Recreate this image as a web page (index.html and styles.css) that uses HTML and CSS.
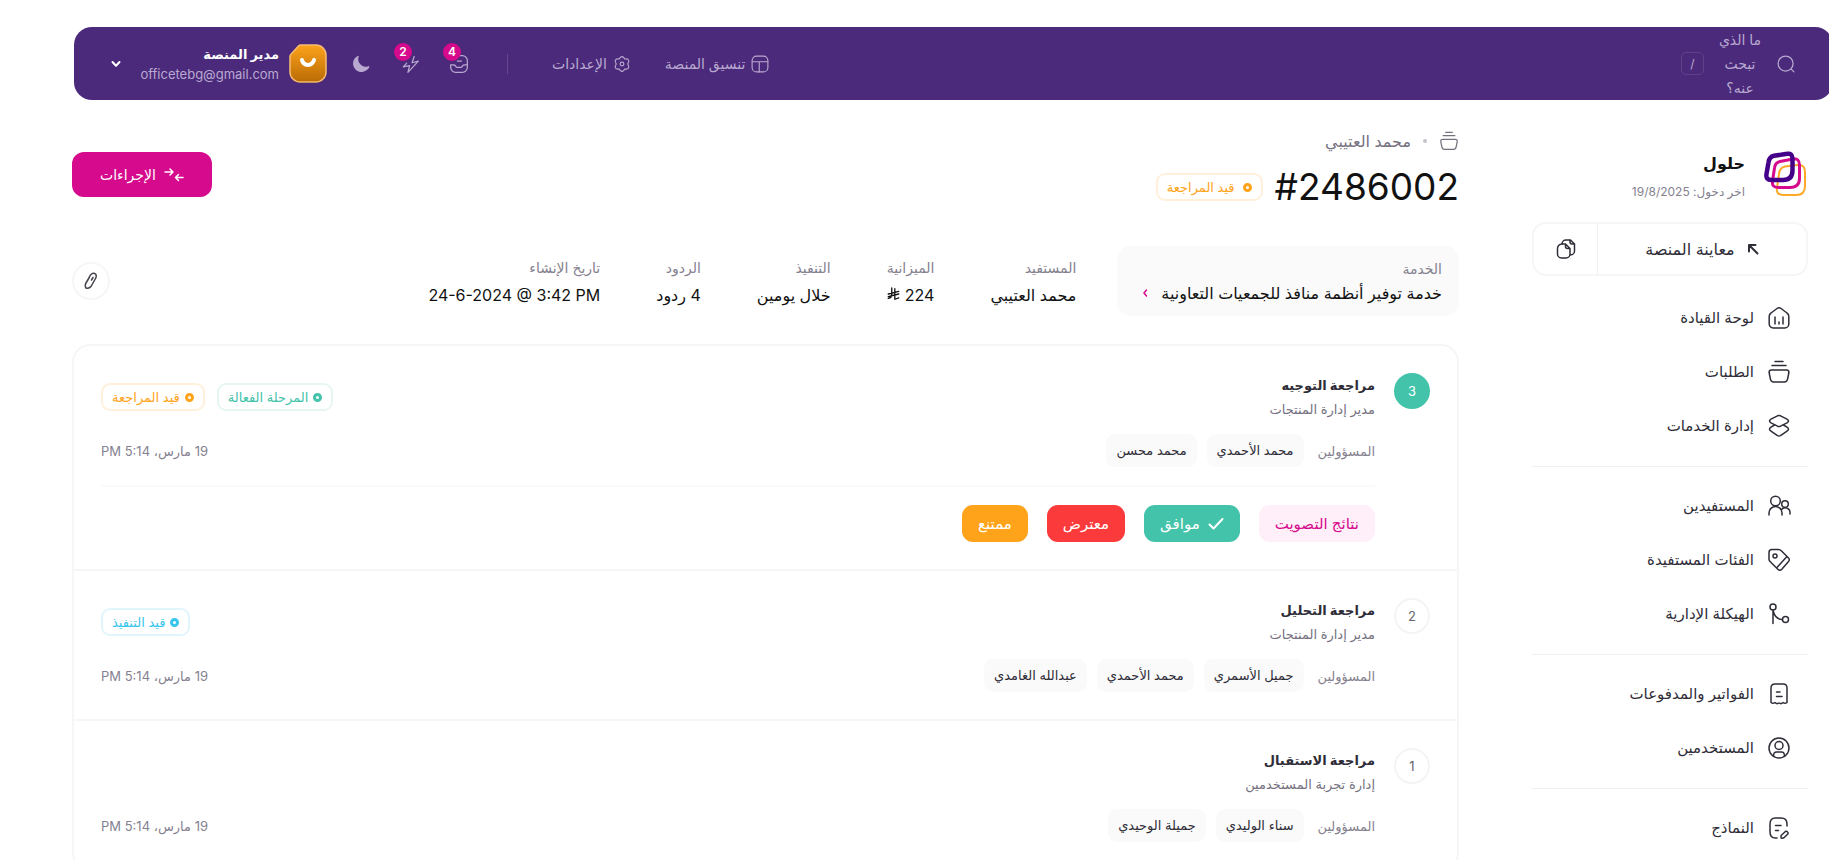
FILE: index.html
```html
<!DOCTYPE html>
<html lang="ar" dir="rtl">
<head>
    <meta charset="UTF-8">
    <meta name="viewport" content="width=device-width, initial-scale=1.0">
    <title>طلب #2486002 - حلول</title>
    <link rel="stylesheet" href="styles.css">
</head>
<body>
    <header class="topbar">
        <button type="button" class="search">
            <svg class="icon" width="20" height="20" viewBox="0 0 24 24"><circle cx="11.5" cy="11.5" r="9"/><path d="M18.500 18.500l3 3"/></svg>
            <span class="search-text">ما الذي تبحث عنه؟</span>
            <kbd class="search-key">/</kbd>
        </button>
        <nav class="top-nav">
            <a href="#" class="top-link">
                <svg class="icon" width="18" height="18" viewBox="0 0 24 24"><rect x="1.500" y="1.500" width="21" height="21" rx="6"/><path d="M1.500 9h21M11 9v13.500"/></svg>
                تنسيق المنصة
            </a>
            <a href="#" class="top-link">
                <svg class="icon" width="18" height="18" viewBox="0 0 24 24"><path d="M9.600 3.500Q12 .8 14.400 3.500L15.800 5.400 18.200 5.100Q21.800 5.800 20.800 9.500L19.600 12 20.800 14.500Q21.800 18.200 18.200 18.900L15.800 18.600 14.400 20.500Q12 23.200 9.600 20.500L8.200 18.600 5.800 18.900Q2.200 18.200 3.200 14.500L4.400 12 3.200 9.500Q2.200 5.800 5.800 5.100L8.200 5.400z"/><circle cx="12" cy="12" r="2.500"/></svg>
                الإعدادات
            </a>
        </nav>
        <span class="top-divider"></span>
        <div class="top-icons">
            <button type="button" class="icon-btn" aria-label="الرسائل">
                <svg class="icon" width="20" height="20" viewBox="0 0 24 24"><path d="M13 2h3a6 6 0 0 1 6 6v8a6 6 0 0 1-6 6H8a6 6 0 0 1-6-6v-3h3.500c1 0 1.700.4 2.200 1.200l.3.600c.4.700 1.100 1.200 2 1.200h4c.9 0 1.600-.5 2-1.200l.3-.6c.5-.8 1.200-1.200 2.200-1.200H22M10 8.500h5"/></svg>
                <span class="count">4</span>
            </button>
            <button type="button" class="icon-btn" aria-label="التنبيهات">
                <svg class="icon" width="20" height="20" viewBox="0 0 24 24"><path d="M17 3l-2.500 7.500L22 8.500 9.500 22l2-8L4 15.500 8 11"/></svg>
                <span class="count">2</span>
            </button>
            <button type="button" class="icon-btn" aria-label="الوضع الليلي">
                <svg class="icon-fill" width="20" height="20" viewBox="0 0 24 24"><path d="M8 2.300A10.200 10.200 0 1 0 22 15.500a.8.800 0 0 0-1.100-.9A9 9 0 0 1 9.200 3.300a.8.800 0 0 0-1.200-1z"/></svg>
            </button>
        </div>
        <button type="button" class="profile">
            <svg width="38" height="40" viewBox="0 0 38 40">
                <defs>
                    <linearGradient id="avatarFill" x1="0" y1="0" x2="0" y2="1">
                        <stop offset="0" stop-color="#fda31c"/>
                        <stop offset="1" stop-color="#b96b04"/>
                    </linearGradient>
                </defs>
                <path d="M11 3.500h16a10 10 0 0 1 10 10V29a10 10 0 0 1-10 10H11A10 10 0 0 1 1 29V14z" fill="#24104a"/>
                <path d="M12 1h15a10 10 0 0 1 10 10v17a10 10 0 0 1-10 10H11A10 10 0 0 1 1 28V12.500c0-1 .4-1.700 1-2.300L9.500 2c.7-.7 1.500-1 2.500-1z" fill="url(#avatarFill)" stroke="#f6bd72" stroke-width="1.500"/>
                <path d="M13 16c1.500 6.500 10 6.500 12 0" fill="none" stroke="#fff" stroke-width="4" stroke-linecap="round"/>
            </svg>
            <span class="profile-text">
                <span class="profile-name">مدير المنصة</span>
                <span class="profile-mail">officetebg@gmail.com</span>
            </span>
            <svg class="icon bold chevron" width="10" height="10" viewBox="0 0 10 10"><path d="M1.500 3 5 6.800 8.500 3"/></svg>
        </button>
    </header>

    <div class="layout">
        <aside class="sidebar">
            <div class="brand">
                <svg width="44" height="46" viewBox="0 0 44 46" fill="none">
                    <path d="M21 15.500 34 14q7-.5 7 7v14q0 9-9 9H19q-7 0-6-7l2-14q.8-6.500 6-7.500z" stroke="#ffa928" stroke-width="2"/>
                    <path d="M16 10.500 29 8q6.500-1 6.500 6v13q0 9.500-9.500 9.500H14q-6.500 0-5.500-6.500l2-13q.7-5.500 5.500-6.500z" stroke="#d60a8c" stroke-width="3"/>
                    <path d="M10 4.800 23 2.800q5.500-1 5.500 5v11.500q0 9.700-9.500 9.700H7.500q-6 0-5-6l2-11.700Q5.200 6 10 4.800z" stroke="#450089" stroke-width="4.500"/>
                </svg>
                <div class="brand-text">
                    <strong class="brand-name">حلول</strong>
                    <span class="brand-login">اخر دخول: 19/8/2025</span>
                </div>
            </div>
            <div class="preview">
                <a href="#" class="preview-link">
                    <svg class="icon bold" width="12" height="12" viewBox="0 0 12 12"><path d="M2 8.500V2h6.500M2 2l8.500 8.500"/></svg>
                    معاينة المنصة
                </a>
                <button type="button" class="preview-copy" aria-label="نسخ">
                    <svg class="icon" width="20" height="22" viewBox="0 0 20 22"><path d="M6 6a4 4 0 0 1 4-4h4.500L18.500 6v7a4 4 0 0 1-4 4M14 2v2a2 2 0 0 0 2 2h2.500"/><path d="M6 6h3.500l4.500 4.500V16a4 4 0 0 1-4 4H5.500a4 4 0 0 1-4-4v-5.500A4.500 4.500 0 0 1 6 6zM9.500 6v2.500a2 2 0 0 0 2 2H14"/></svg>
                </button>
            </div>
            <nav class="menu">
                <div class="menu-group">
                    <a href="#" class="menu-item">
                        <svg class="icon" width="24" height="24" viewBox="0 0 24 24"><path d="M10 2.500 4 7a4 4 0 0 0-1.800 3.400V18a4 4 0 0 0 4 4h11.600a4 4 0 0 0 4-4v-7.600A4 4 0 0 0 20 7l-6-4.500a3.300 3.300 0 0 0-4 0zM8 11v7M12 16v2M16 11v7"/></svg>
                        لوحة القيادة
                    </a>
                    <a href="#" class="menu-item">
                        <svg class="icon" width="24" height="24" viewBox="0 0 24 24"><path d="M8 1.500h8M5 5.500h14M4.500 10h15q2.800 0 2.300 3l-1.200 6q-.5 3-3.300 3H6.700q-2.800 0-3.300-3l-1.200-6Q1.700 10 4.500 10z"/></svg>
                        الطلبات
                    </a>
                    <a href="#" class="menu-item">
                        <svg class="icon" width="24" height="24" viewBox="0 0 24 24"><path d="M10.500 1.800 4 5.200q-3 1.800 0 3.600l6.500 3.400q1.500.7 3 0L20 8.800q3-1.800 0-3.600l-6.500-3.400q-1.500-.7-3 0z"/><path d="m7.500 11-3.500 2.200q-3 2 0 3.900l6.500 4.500q1.500.8 3 0l6.500-4.500q3-1.900 0-3.900L16.500 11"/></svg>
                        إدارة الخدمات
                    </a>
                </div>
                <div class="menu-group">
                    <a href="#" class="menu-item">
                        <svg class="icon" width="24" height="24" viewBox="0 0 24 24"><circle cx="8.500" cy="7" r="4.800"/><path d="M2 21v-2a6.500 6.500 0 0 1 13 0v2"/><circle cx="18" cy="10" r="3.300"/><path d="M14.500 15.500a4.800 4.800 0 0 1 8.500 3.500v1"/></svg>
                        المستفيدين
                    </a>
                    <a href="#" class="menu-item">
                        <svg class="icon" width="24" height="24" viewBox="0 0 24 24"><path d="M5 1.500h6.500q1.500 0 2.800 1.300l7 7q2 2 0 4l-6.500 7.400q-2 2-4 0l-7-7Q2 13 2 11.500v-7q0-3 3-3zM19.500 9 10 19.500"/><circle cx="8" cy="8" r="2"/></svg>
                        الفئات المستفيدة
                    </a>
                    <a href="#" class="menu-item">
                        <svg class="icon" width="24" height="24" viewBox="0 0 24 24"><circle cx="6" cy="5" r="3"/><circle cx="18.500" cy="17.500" r="3"/><path d="M6 8v13.500M6.200 9c1.300 5 4 8.300 9 8.600"/></svg>
                        الهيكلة الإدارية
                    </a>
                </div>
                <div class="menu-group">
                    <a href="#" class="menu-item">
                        <svg class="icon" width="24" height="24" viewBox="0 0 24 24"><path d="M4 20.500V6q0-4 4-4h8q4 0 4 4v14.500q-2 1.500-4 0-2 2-4 0.500-2 1.500-4-.5-2 1.500-4 0zM9.500 10H13M9.500 14.500H15"/></svg>
                        الفواتير والمدفوعات
                    </a>
                    <a href="#" class="menu-item">
                        <svg class="icon" width="24" height="24" viewBox="0 0 24 24"><circle cx="12" cy="12" r="10"/><circle cx="12" cy="9.500" r="4"/><path d="M6.500 20q0-4 3-4h5q3 0 3 4"/></svg>
                        المستخدمين
                    </a>
                </div>
                <div class="menu-group">
                    <a href="#" class="menu-item">
                        <svg class="icon" width="24" height="24" viewBox="0 0 24 24"><path d="M20 10V8q0-6-6-6H8.500Q3 2 3 8v8q0 6 5.500 6h1.500M8.500 9.500H14M8.500 14.500h3M20 15.500q1.500 1 1 2.200l-4 4q-1.500.8-2.800.3-.6-1.300.2-2.800l4-3.700q.8-.5 1.600 0z"/></svg>
                        النماذج
                    </a>
                </div>
            </nav>
        </aside>

        <main class="content">
            <div class="page-head">
                <div>
                    <div class="breadcrumb">
                        <svg class="icon" width="20" height="20" viewBox="0 0 24 24"><path d="M8 1.500h8M5 5.500h14M4.500 10h15q2.800 0 2.300 3l-1.200 6q-.5 3-3.300 3H6.700q-2.800 0-3.300-3l-1.200-6Q1.700 10 4.500 10z"/></svg>
                        <span class="breadcrumb-dot"></span>
                        <a href="#" class="breadcrumb-link">محمد العتيبي</a>
                    </div>
                    <div class="title-row">
                        <h1 class="title" dir="ltr">#2486002</h1>
                        <span class="badge badge-orange">قيد المراجعة</span>
                    </div>
                </div>
                <button type="button" class="actions-btn">
                    <svg class="icon" width="20" height="16" viewBox="0 0 20 16"><path d="M1 5h8M6 2l3 3-3 3M19 10.500h-7.500M14.500 7.500l-3 3 3 3"/></svg>
                    الإجراءات
                </button>
            </div>

            <div class="info-row">
                <a href="#" class="service">
                    <span class="info-label">الخدمة</span>
                    <span class="service-name">
                        خدمة توفير أنظمة منافذ للجمعيات التعاونية
                        <svg class="icon pink" width="8" height="10" viewBox="0 0 8 10"><path d="M5.500 2 3 5l2.500 3"/></svg>
                    </span>
                </a>
                <dl class="info-list">
                    <div><dt class="info-label">المستفيد</dt><dd class="info-value">محمد العتيبي</dd></div>
                    <div>
                        <dt class="info-label">الميزانية</dt>
                        <dd class="info-value">
                            224
                            <svg class="icon" width="13" height="14" viewBox="0 0 14 16"><path d="M5 1v9q0 2-4 3M8.500 2v12M1 8l12-3M1 11l12-3M8.500 14l4.500-1.500"/></svg>
                        </dd>
                    </div>
                    <div><dt class="info-label">التنفيذ</dt><dd class="info-value">خلال يومين</dd></div>
                    <div><dt class="info-label">الردود</dt><dd class="info-value">4 ردود</dd></div>
                    <div><dt class="info-label">تاريخ الإنشاء</dt><dd class="info-value" dir="ltr">24-6-2024 @ 3:42 PM</dd></div>
                </dl>
                <button type="button" class="attach" aria-label="المرفقات">
                    <svg class="icon" width="18" height="18" viewBox="0 0 18 18"><path d="M9 2.500q2.500-2 4.500-.5 1.500 2 0 4.500L9 14.500q-2 2.500-5 1.500-1.500-2.500 0-5L7.500 5Q8.300 3.200 9 2.500zM11 5.500 9.500 8"/></svg>
                </button>
            </div>

            <ol class="steps">
                <li class="step">
                    <span class="step-no active">3</span>
                    <div class="step-body">
                        <div class="step-row">
                            <div>
                                <h2 class="step-title">مراجعة التوجيه</h2>
                                <p class="step-sub">مدير إدارة المنتجات</p>
                            </div>
                            <div class="badges">
                                <span class="badge badge-green">المرحلة الفعالة</span>
                                <span class="badge badge-orange">قيد المراجعة</span>
                            </div>
                        </div>
                        <div class="step-row people-row">
                            <div class="people">
                                <span class="people-label">المسؤولين</span>
                                <span class="chip">محمد الأحمدي</span>
                                <span class="chip">محمد محسن</span>
                            </div>
                            <time class="step-date">19 مارس، 5:14 PM</time>
                        </div>
                        <div class="votes">
                            <button type="button" class="vote vote-result">نتائج التصويت</button>
                            <button type="button" class="vote vote-yes">
                                <svg class="icon bold" width="16" height="12" viewBox="0 0 16 12"><path d="m1.500 6.500 4 4L14.500 1"/></svg>
                                موافق
                            </button>
                            <button type="button" class="vote vote-no">معترض</button>
                            <button type="button" class="vote vote-abstain">ممتنع</button>
                        </div>
                    </div>
                </li>
                <li class="step">
                    <span class="step-no">2</span>
                    <div class="step-body">
                        <div class="step-row">
                            <div>
                                <h2 class="step-title">مراجعة التحليل</h2>
                                <p class="step-sub">مدير إدارة المنتجات</p>
                            </div>
                            <div class="badges">
                                <span class="badge badge-blue">قيد التنفيذ</span>
                            </div>
                        </div>
                        <div class="step-row people-row">
                            <div class="people">
                                <span class="people-label">المسؤولين</span>
                                <span class="chip">جميل الأسمري</span>
                                <span class="chip">محمد الأحمدي</span>
                                <span class="chip">عبدالله الغامدي</span>
                            </div>
                            <time class="step-date">19 مارس، 5:14 PM</time>
                        </div>
                    </div>
                </li>
                <li class="step">
                    <span class="step-no">1</span>
                    <div class="step-body">
                        <div class="step-row">
                            <div>
                                <h2 class="step-title">مراجعة الاستقبال</h2>
                                <p class="step-sub">إدارة تجربة المستخدمين</p>
                            </div>
                        </div>
                        <div class="step-row people-row">
                            <div class="people">
                                <span class="people-label">المسؤولين</span>
                                <span class="chip">سناء الوليدي</span>
                                <span class="chip">جميلة الوحيدي</span>
                            </div>
                            <time class="step-date">19 مارس، 5:14 PM</time>
                        </div>
                    </div>
                </li>
            </ol>
        </main>
    </div>
</body>
</html>
```
FILE: styles.css
```css
*,
*::before {
    box-sizing: border-box;
    margin: 0;
    padding: 0;
}
body {
    height: 100vh;
    overflow: hidden;
    background: #fff;
    color: #111;
    font-family: Inter, "DejaVu Sans", sans-serif;
    font-size: 14px;
    line-height: 24px;
}
a {
    color: inherit;
    text-decoration: none;
}
button {
    font: inherit;
    color: inherit;
    background: none;
    border: none;
    cursor: pointer;
}
ol {
    list-style: none;
}
.icon {
    flex: none;
    fill: none;
    stroke: currentColor;
    stroke-width: 1.5;
    stroke-linecap: round;
    stroke-linejoin: round;
}
.icon.bold {
    stroke-width: 2;
}
.icon.pink {
    color: #d60a8c;
}
.icon-fill {
    fill: currentColor;
}

/* top bar */
.topbar {
    display: flex;
    align-items: center;
    height: 73px;
    margin: 27px -4px 0 74px;
    padding: 0 37px;
    background: #4b2a7b;
    border-radius: 18px;
    color: #b9a9d0;
}
.search {
    display: flex;
    align-items: center;
    gap: 10px;
}
.search-text {
    width: 52px;
    text-align: center;
}
.search-key {
    width: 23px;
    height: 23px;
    border: 1px solid #5f4189;
    border-radius: 5px;
    font: inherit;
    font-size: 12px;
    line-height: 21px;
}
.top-nav {
    display: flex;
    gap: 34px;
    margin-right: auto;
}
.top-link {
    display: flex;
    align-items: center;
    gap: 6px;
}
.top-divider {
    width: 1px;
    height: 20px;
    margin: 0 44px 0 38px;
    background: #65488f;
}
.top-icons {
    display: flex;
    gap: 29px;
}
.icon-btn {
    position: relative;
    display: flex;
}
.count {
    position: absolute;
    top: -11px;
    right: 8px;
    width: 18px;
    height: 18px;
    border-radius: 50%;
    background: #d60a8c;
    color: #fff;
    font-size: 12px;
    font-weight: 600;
    line-height: 18px;
    text-align: center;
}
.profile {
    display: flex;
    align-items: center;
    gap: 10px;
    margin-right: 24px;
}
.profile-text {
    display: flex;
    flex-direction: column;
    width: 138px;
    line-height: 20px;
    text-align: right;
}
.profile-name {
    color: #fff;
    font-size: 13px;
    font-weight: 700;
}
.profile-mail {
    font-size: 13px;
}
.chevron {
    margin-right: 10px;
    color: #fff;
}

/* sidebar */
.layout {
    display: flex;
    gap: 73px;
    padding: 29px 21px 0 72px;
}
.sidebar {
    flex: 0 0 276px;
    padding-top: 22px;
    color: #2f2d38;
}
.brand {
    display: flex;
    gap: 19px;
    height: 71px;
}
.brand-text {
    display: flex;
    flex-direction: column;
    gap: 5px;
}
.brand-name {
    font-size: 16px;
    color: #111;
}
.brand-login {
    color: #85818f;
    font-size: 12px;
}
.preview {
    display: flex;
    height: 54px;
    margin-bottom: 15px;
    border: 2px solid #f6f6f7;
    border-radius: 14px;
}
.preview-link {
    flex: 1;
    display: flex;
    align-items: center;
    justify-content: center;
    gap: 12px;
    font-size: 16px;
}
.preview-copy {
    display: flex;
    align-items: center;
    justify-content: center;
    width: 64px;
    border-right: 1px solid #efeff1;
}
.menu-group {
    padding: 12px 0 13px;
    border-bottom: 1px solid #f1f1f3;
}
.menu-group:first-child {
    padding-top: 0;
}
.menu-item {
    display: flex;
    align-items: center;
    gap: 13px;
    height: 54px;
    padding-right: 17px;
    font-size: 15px;
}

/* page head */
.content {
    flex: 1;
    min-width: 0;
}
.page-head {
    display: flex;
    justify-content: space-between;
    align-items: flex-start;
}
.breadcrumb {
    display: flex;
    align-items: center;
    gap: 12px;
    color: #75717f;
    font-size: 16px;
}
.breadcrumb-dot {
    width: 4px;
    height: 4px;
    border-radius: 50%;
    background: #c5c3ca;
}
.title-row {
    display: flex;
    align-items: center;
    gap: 12px;
    margin-top: 12px;
}
.title {
    font-size: 37px;
    font-weight: 400;
    line-height: 44px;
}
.actions-btn {
    display: flex;
    align-items: center;
    gap: 8px;
    height: 45px;
    margin-top: 23px;
    padding: 0 28px;
    border-radius: 12px;
    background: #d60a8c;
    color: #fff;
}

.badge {
    display: inline-flex;
    align-items: center;
    gap: 8px;
    height: 28px;
    padding: 0 9px;
    border: 2px solid;
    border-radius: 9px;
    font-size: 13px;
}
.badge::before {
    content: "";
    width: 9px;
    height: 9px;
    border: 3px solid;
    border-radius: 50%;
}
.badge-orange {
    border-color: #fff0db;
    color: #ffa31a;
}
.badge-orange::before {
    border-color: #ffa31a;
}
.badge-green {
    border-color: #e6f7f3;
    color: #42c3aa;
}
.badge-green::before {
    border-color: #42c3aa;
}
.badge-blue {
    border-color: #e0f6fc;
    color: #38c6ec;
}
.badge-blue::before {
    border-color: #38c6ec;
}

/* request info */
.info-row {
    display: flex;
    align-items: center;
    margin-top: 37px;
}
.service {
    display: flex;
    flex-direction: column;
    padding: 11px 17px 11px 24px;
    border-radius: 14px;
    background: #fafafa;
}
.service-name {
    display: flex;
    align-items: center;
    gap: 12px;
    font-size: 16px;
}
.info-label {
    color: #85818f;
    font-size: 14px;
}
.info-list {
    display: flex;
    gap: 56px;
    margin-right: 41px;
}
.info-value {
    margin-top: 3px;
    font-size: 16px;
}
.attach {
    display: flex;
    align-items: center;
    justify-content: center;
    width: 38px;
    height: 38px;
    margin-right: auto;
    border: 2px solid #f6f6f7;
    border-radius: 50%;
    color: #44424c;
}

/* steps */
.steps {
    margin-top: 28px;
    border: 2px solid #f6f6f7;
    border-radius: 18px;
}
.step {
    display: flex;
    gap: 19px;
    padding: 27px;
    border-bottom: 2px solid #f6f6f7;
}
.step:last-child {
    border-bottom: none;
}
.step-no {
    flex: none;
    width: 36px;
    height: 36px;
    border: 2px solid #f4f4f5;
    border-radius: 50%;
    color: #66636f;
    font-size: 13px;
    line-height: 32px;
    text-align: center;
}
.step-no.active {
    border-color: #42c3aa;
    background: #42c3aa;
    color: #fff;
}
.step-body {
    flex: 1;
}
.step-row {
    display: flex;
    justify-content: space-between;
    align-items: center;
}
.step-title {
    font-size: 13px;
    font-weight: 700;
    color: #2f2d38;
}
.step-sub {
    color: #75717f;
    font-size: 13px;
}
.badges {
    display: flex;
    gap: 12px;
}
.badges .badge {
    gap: 5px;
}
.people-row {
    margin-top: 13px;
}
.people {
    display: flex;
    align-items: center;
    gap: 10px;
}
.people-label {
    margin-left: 4px;
    color: #85818f;
    font-size: 13px;
}
.chip {
    height: 33px;
    padding: 0 10px;
    border-radius: 9px;
    background: #fafafa;
    color: #2f2d38;
    font-size: 13px;
    line-height: 33px;
}
.step-date {
    color: #85818f;
    font-size: 13px;
}
.votes {
    display: flex;
    gap: 19px;
    margin-top: 18px;
    padding-top: 18px;
    border-top: 2px solid #fafafa;
}
.vote {
    display: flex;
    align-items: center;
    gap: 8px;
    height: 37px;
    padding: 0 16px;
    border-radius: 11px;
    color: #fff;
    font-size: 15px;
}
.vote-result {
    background: #ffeff9;
    color: #d60a8c;
}
.vote-yes {
    background: #42c3aa;
}
.vote-no {
    background: #fb3b3b;
}
.vote-abstain {
    background: #ffa31a;
}
```
